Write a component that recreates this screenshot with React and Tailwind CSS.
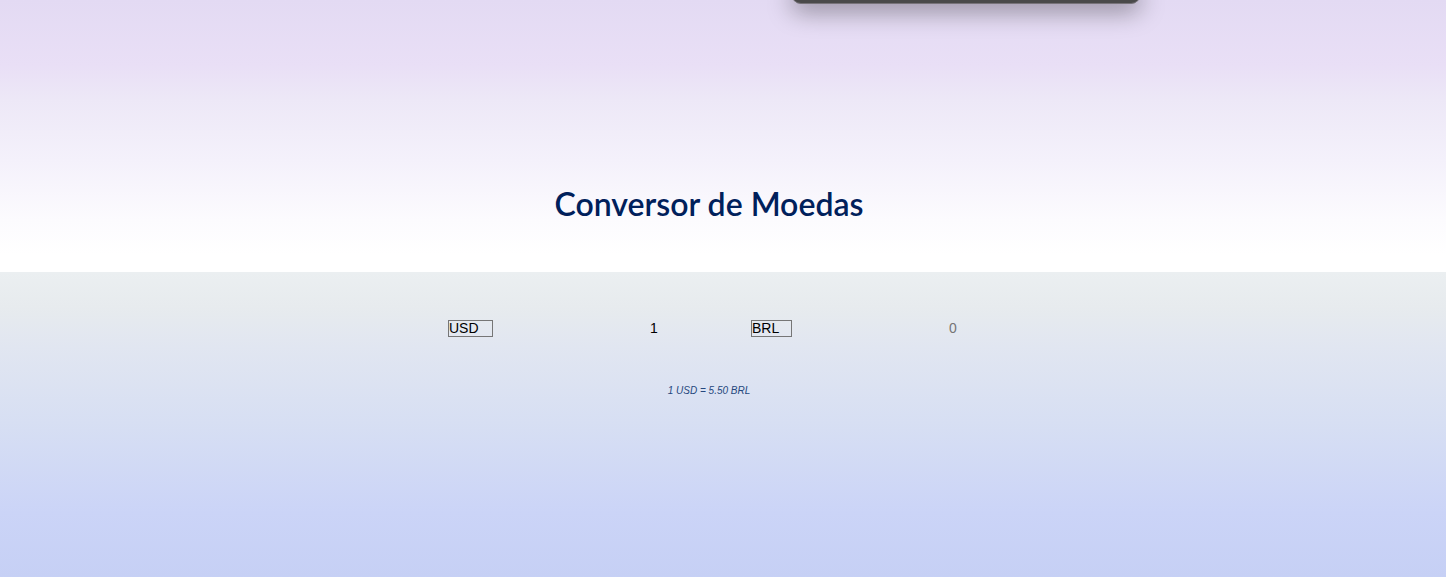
import { useState } from 'react';

const RATE = 5.5;

function CurrencyField({ code, options, selectClass, ...inputProps }) {
  return (
    <div className="flex items-center gap-36">
      <select
        aria-label={`Moeda ${code}`}
        defaultValue={code}
        className={`h-[17px] appearance-none border border-[#767676] bg-transparent text-sm leading-[15px] text-black ${selectClass}`}
      >
        {options.map((option) => (
          <option key={option}>{option}</option>
        ))}
      </select>
      <input
        type="text"
        inputMode="decimal"
        aria-label={`Valor em ${code}`}
        className="h-[17px] w-[34px] bg-transparent text-center text-sm leading-[17px] text-black placeholder:text-[#757575]"
        {...inputProps}
      />
    </div>
  );
}

export default function App() {
  const [amount, setAmount] = useState('1');

  return (
    <main className="flex min-h-screen flex-col font-['Liberation_Sans',Arial,sans-serif]">
      <section className="flex h-[272px] flex-col items-center overflow-hidden bg-[linear-gradient(to_bottom,#e3daf3_0px,#e9dff6_65px,#ede8f7_100px,#f4f1fb_160px,#fcfbfe_220px,#ffffff_255px)]">
        <div className="flex w-full justify-center pl-[485px]">
          <div className="-mt-5 h-6 w-[350px] rounded-[10px] border border-[#777379] bg-[#4a4a4a] shadow-[0_8px_24px_rgba(0,0,0,0.35)]" />
        </div>
        <h1 className="mt-44 pr-7 text-center font-['Lato',sans-serif] text-[32px] leading-[48px] font-semibold text-[#00205b]">
          Conversor de Moedas
        </h1>
      </section>

      <section className="flex flex-1 flex-col items-center bg-[linear-gradient(to_bottom,#ebeff1_0px,#e7ebee_35px,#e1e6f1_75px,#d7dff3_150px,#cbd4f7_240px,#c6d0f5_305px)] pt-12 pr-7">
        <form className="flex items-center gap-20" onSubmit={(e) => e.preventDefault()}>
          <CurrencyField
            code="USD"
            options={['USD', 'BRL', 'EUR']}
            selectClass="w-[45px]"
            value={amount}
            onChange={(e) => setAmount(e.target.value)}
          />
          <CurrencyField
            code="BRL"
            options={['BRL', 'USD', 'EUR']}
            selectClass="w-[41px]"
            placeholder="0"
            readOnly
          />
        </form>
        <p className="mt-12 text-[10px] leading-3 text-[#25477d] italic">
          1 USD = {RATE.toFixed(2)} BRL
        </p>
      </section>
    </main>
  );
}
